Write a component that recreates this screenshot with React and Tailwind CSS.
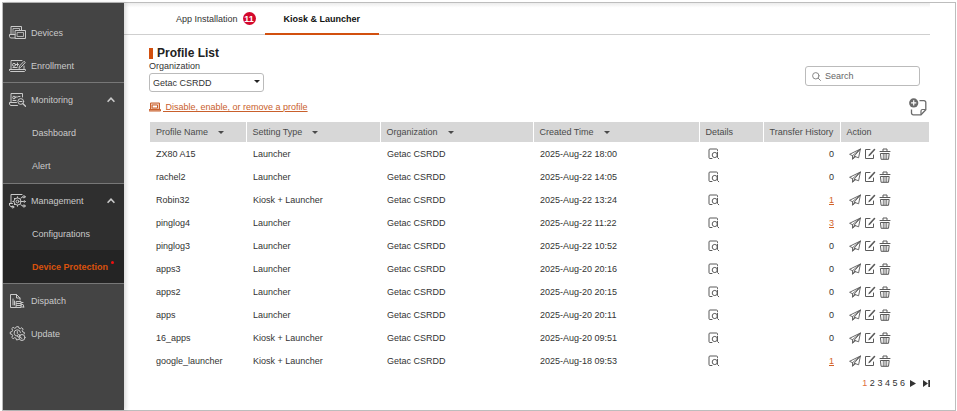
import React from "react";

const stroke = {
  fill: "none",
  stroke: "currentColor",
  strokeWidth: 1,
  strokeLinecap: "round",
  strokeLinejoin: "round",
};

function DevicesIcon() {
  return (
    <svg className="h-4 w-[17px] shrink-0" viewBox="0 0 17 16" {...stroke} aria-hidden="true">
      <path d="M2 9.500V1.500h10.500V5" />
      <path d="M4 9.500V3.500h6.500V5" strokeWidth="0.8" />
      <path d="M6 9.500H.5v2l1 1.500H6" />
      <rect x="6.500" y="5.500" width="10" height="8" />
      <rect x="8.500" y="7.500" width="6" height="4" strokeWidth="0.8" />
    </svg>
  );
}

function EnrollmentIcon() {
  return (
    <svg className="h-4 w-[17px] shrink-0" viewBox="0 0 17 16" {...stroke} aria-hidden="true">
      <path d="M2 11V2.500h11" />
      <path d="M15 8v3" />
      <path d="M.5 11.500h16v1l-1 1H1.500l-1-1z" />
      <circle cx="5" cy="6.800" r="1.500" />
      <path d="M6.500 6.500h3M8.500 5v3M4 9.500h4" />
      <path d="M10 10l.5-2L15 3.300l1.300 1.200L11.800 9.300z" />
    </svg>
  );
}

function MonitoringIcon() {
  return (
    <svg className="h-4 w-[17px] shrink-0" viewBox="0 0 17 16" {...stroke} aria-hidden="true">
      <path d="M2 10.500V1.500h11.500V5" />
      <path d="M7.500 10.500H.5V12l1 1.500h7" />
      <circle cx="5" cy="5.500" r="1.300" />
      <path d="M6.500 5h2M9.500 4.500h1.500M4 8.500h3" />
      <circle cx="11.800" cy="9.500" r="2.900" />
      <path d="M10.500 9.500h2.500" />
      <path d="M14 11.700l2.500 2.600" strokeWidth="1.300" />
    </svg>
  );
}

function ManagementIcon() {
  return (
    <svg className="h-4 w-[17px] shrink-0" viewBox="0 0 17 16" {...stroke} aria-hidden="true">
      <path d="M2 10V1.500h11" />
      <path d="M.5 10.500h3M.5 10.500V12l1 1.500H4" />
      <circle cx="8.500" cy="8.500" r="3.600" />
      <circle cx="8.500" cy="8.500" r="1.400" />
      <path d="M8.500 3.800v1M8.500 12.200v1M3.800 8.500h1M5.200 5.200l.7.7M5.200 11.800l.7-.7M11.800 5.200l1.700-1.200M12.200 8.500h2M11.800 11.800l1.700 1" />
      <circle cx="15" cy="3.800" r="1.100" />
      <circle cx="15.400" cy="8.500" r="0.800" />
      <circle cx="15" cy="13" r="1.100" />
      <circle cx="3.800" cy="14" r="1" />
    </svg>
  );
}

function DispatchIcon() {
  return (
    <svg className="h-4 w-[17px] shrink-0" viewBox="0 0 17 16" {...stroke} aria-hidden="true">
      <path d="M7 14.500H1.500v-13h6l3.500 3.500v2" />
      <path d="M7.500 1.500V5H11" />
      <path d="M4 6v6M5.500 8v4" />
      <path d="M7.500 8.500h4.500v6H7.500zM7.500 10.500H12M7.500 12.500H12" />
      <path d="M12.500 9.500h1.500M12.500 11.500h1.500M12.500 14h2.500M14.500 12.500v1.500" />
    </svg>
  );
}

function UpdateIcon() {
  return (
    <svg className="h-4 w-[17px] shrink-0" viewBox="0 0 17 16" {...stroke} aria-hidden="true">
      <path d="M9.500 13.500l-2 .5-.4-1.700-1.500-.6-1.500 1L2.700 11.300l1-1.500-.6-1.400-1.800-.4V6l1.800-.4.6-1.400-1-1.500L4.100 1.300l1.500 1 1.400-.6.5-1h2l.4 1.400 1.400.6 1.500-1 1.400 1.400-1 1.500.6 1.400 1.500.4v1.500" />
      <path d="M8.500 10.200a3.200 3.200 0 1 1 3-3.700" />
      <path d="M8.300 5.500v2" />
      <circle cx="13" cy="11.500" r="3" />
      <circle cx="9.800" cy="9.800" r="1.300" />
      <path d="M10.500 11l2.500 1.500" />
    </svg>
  );
}

function Chevron() {
  return (
    <svg className="h-2 w-2" viewBox="0 0 8 8" fill="none" stroke="currentColor" strokeWidth="1.600" aria-hidden="true">
      <path d="M.6 5.800L4 2.200 7.400 5.800" />
    </svg>
  );
}

function Caret() {
  return (
    <svg className="h-[3px] w-[6px]" viewBox="0 0 6 3" fill="currentColor" aria-hidden="true">
      <path d="M0 0h6L3 3z" />
    </svg>
  );
}

function DetailsIcon() {
  return (
    <svg className="h-3 w-3" viewBox="0 0 12 12" {...stroke} aria-hidden="true">
      <path d="M9.500 2.500V2a1 1 0 0 0-1-1H2a1 1 0 0 0-1 1v7.500a1 1 0 0 0 1 1h2" />
      <circle cx="6.800" cy="7" r="2.600" />
      <path d="M9.500 4.200v5.300l1.300 1.300" />
    </svg>
  );
}

function SendIcon() {
  return (
    <svg className="h-3 w-3" viewBox="0 0 12 12" {...stroke} strokeWidth="0.9" aria-hidden="true">
      <path d="M11.400 1L.6 6.300l2.900 1.400L11.400 1 9.600 9.800 5.500 8.300z" />
      <path d="M3.500 7.700v3.500l2-2.900" />
      <path d="M3.700 11l2.800-2.200" />
    </svg>
  );
}

function EditIcon() {
  return (
    <svg className="h-3 w-3" viewBox="0 0 12 12" {...stroke} aria-hidden="true">
      <path d="M6 1.500H1.500v9h8V7" />
      <path d="M5.500 7l5-5.500" strokeWidth="1.600" />
      <path d="M4.800 7.900l.5-.6" />
    </svg>
  );
}

function TrashIcon() {
  return (
    <svg className="h-3 w-3" viewBox="0 0 12 12" {...stroke} aria-hidden="true">
      <path d="M1 3.500h10M4 3.200V1h4v2.200" />
      <path d="M1.800 5.500h8.400L9.500 11.300h-7z" />
      <path d="M4.300 6v5M6 6v5M7.700 6v5" strokeWidth="0.8" />
    </svg>
  );
}

function LaptopIcon() {
  return (
    <svg className="h-[10px] w-3" viewBox="0 0 12 10" {...stroke} aria-hidden="true">
      <path d="M1.500 7V1h9v6z" fill="currentColor" fillOpacity="0.3" />
      <rect x="3.500" y="3" width="5" height="3" fill="#fff" />
      <path d="M.5 7.500h11v1.500H.5z" fill="currentColor" fillOpacity="0.5" />
    </svg>
  );
}

function AddNoteIcon() {
  return (
    <svg className="h-[18px] w-[18px]" viewBox="0 0 18 18" aria-hidden="true">
      <path d="M10.500 2.700H15a1.800 1.800 0 0 1 1.800 1.800v7.300L12 16.800H4.300a1.800 1.800 0 0 1-1.800-1.800V11.500" fill="none" stroke="#6b6b6b" strokeWidth="1.300" />
      <path d="M16.600 11.500H13.500a1.500 1.500 0 0 0-1.500 1.500v3.500" fill="none" stroke="#6b6b6b" strokeWidth="1.200" />
      <circle cx="4.700" cy="4.900" r="4.600" fill="#6b6b6b" />
      <path d="M4.700 2.300v5.200M2.100 4.900h5.200" stroke="#fff" strokeWidth="1.200" />
    </svg>
  );
}

function NavItem({ icon, label }) {
  return (
    <a href="#" className="flex h-[33px] items-center gap-[5px] pl-[6px]">
      {icon}
      {label}
    </a>
  );
}

function NavGroup({ icon, label }) {
  return (
    <button type="button" aria-expanded="true" className="flex h-[33px] w-full items-center gap-[5px] pr-[9px] pl-[6px] text-left">
      {icon}
      <span className="flex-1">{label}</span>
      <Chevron />
    </button>
  );
}

function Sidebar() {
  return (
    <nav className="z-10 w-[121px] shrink-0 bg-[#444] pt-[13px] text-[#cacaca] shadow-[2px_0_4px_rgba(0,0,0,0.15)]">
      <NavItem icon={<DevicesIcon />} label="Devices" />
      <NavItem icon={<EnrollmentIcon />} label="Enrollment" />
      <div className="border-t border-[#777] pb-px">
        <NavGroup icon={<MonitoringIcon />} label="Monitoring" />
        <a href="#" className="flex h-[33px] items-center pl-[29px]">Dashboard</a>
        <a href="#" className="flex h-[33px] items-center pl-[29px]">Alert</a>
      </div>
      <div className="border-y border-[#777] bg-[#2f2f2f]">
        <NavGroup icon={<ManagementIcon />} label="Management" />
        <a href="#" className="flex h-[33px] items-center pl-[29px]">Configurations</a>
        <a href="#" aria-current="page" className="flex h-[33px] items-center gap-[3px] bg-[#242424] pl-[29px] font-bold text-[#d9520d]">
          Device Protection
          <span className="mb-2 h-[3px] w-[3px] rounded-full bg-[#f01010]" />
        </a>
      </div>
      <NavItem icon={<DispatchIcon />} label="Dispatch" />
      <NavItem icon={<UpdateIcon />} label="Update" />
    </nav>
  );
}

const profiles = [
  ["ZX80 A15", "Launcher", "2025-Aug-22 18:00", 0],
  ["rachel2", "Launcher", "2025-Aug-22 14:05", 0],
  ["Robin32", "Kiosk + Launcher", "2025-Aug-22 13:24", 1],
  ["pinglog4", "Launcher", "2025-Aug-22 11:22", 3],
  ["pinglog3", "Launcher", "2025-Aug-22 10:52", 0],
  ["apps3", "Launcher", "2025-Aug-20 20:16", 0],
  ["apps2", "Launcher", "2025-Aug-20 20:15", 0],
  ["apps", "Launcher", "2025-Aug-20 20:11", 0],
  ["16_apps", "Kiosk + Launcher", "2025-Aug-20 09:51", 0],
  ["google_launcher", "Kiosk + Launcher", "2025-Aug-18 09:53", 1],
];

function HeadCell({ label, sortable }) {
  return (
    <th scope="col" className="border-l border-white px-[6px] font-normal first:border-l-0">
      {sortable ? (
        <button type="button" className="flex items-center gap-[10px] whitespace-nowrap">
          {label}
          <Caret />
        </button>
      ) : (
        <span className="whitespace-nowrap">{label}</span>
      )}
    </th>
  );
}

function ProfileTable() {
  return (
    <table className="w-full table-fixed text-left text-[#333]">
      <colgroup>
        <col className="w-[96px]" />
        <col className="w-[134px]" />
        <col className="w-[153px]" />
        <col className="w-[166px]" />
        <col className="w-[64px]" />
        <col className="w-[77px]" />
        <col />
      </colgroup>
      <thead className="bg-[#d7d7d7] text-[#4a4a4a]">
        <tr className="h-5">
          <HeadCell label="Profile Name" sortable />
          <HeadCell label="Setting Type" sortable />
          <HeadCell label="Organization" sortable />
          <HeadCell label="Created Time" sortable />
          <HeadCell label="Details" />
          <HeadCell label="Transfer History" />
          <HeadCell label="Action" />
        </tr>
      </thead>
      <tbody>
        {profiles.map(([name, type, created, transfers]) => (
          <tr key={name} className="h-[23px]">
            <td className="px-[6px]">{name}</td>
            <td className="px-[7px]">{type}</td>
            <td className="px-[7px]">Getac CSRDD</td>
            <td className="px-[7px]">{created}</td>
            <td className="px-[9px]">
              <button type="button" aria-label={`Details of ${name}`} className="block text-[#5a5a5a]">
                <DetailsIcon />
              </button>
            </td>
            <td className="px-[6px] text-right">
              {transfers > 0 ? (
                <a href="#" className="text-[#d2622a] underline">{transfers}</a>
              ) : (
                transfers
              )}
            </td>
            <td className="px-[9px]">
              <div className="flex gap-[3px] text-[#5a5a5a]">
                <button type="button" aria-label={`Send ${name}`}><SendIcon /></button>
                <button type="button" aria-label={`Edit ${name}`}><EditIcon /></button>
                <button type="button" aria-label={`Delete ${name}`}><TrashIcon /></button>
              </div>
            </td>
          </tr>
        ))}
      </tbody>
    </table>
  );
}

function Pagination() {
  return (
    <nav aria-label="Pages" className="flex items-center justify-end pt-[5px] text-[#333]">
      <div>
        <a href="#" aria-current="page" className="text-[#e0703a]">1</a>
        {[2, 3, 4, 5, 6].map((page) => (
          <React.Fragment key={page}>
            {" "}
            <a href="#">{page}</a>
          </React.Fragment>
        ))}
      </div>
      <button type="button" aria-label="Next page" className="ml-[5px]">
        <svg className="h-[7px] w-[6px]" viewBox="0 0 6 7" fill="currentColor"><path d="M0 0l6 3.500L0 7z" /></svg>
      </button>
      <button type="button" aria-label="Last page" className="ml-[7px]">
        <svg className="h-[7px] w-[7px]" viewBox="0 0 7 7" fill="currentColor"><path d="M0 0l5 3.500L0 7zM5.300 0H7v7H5.300z" /></svg>
      </button>
    </nav>
  );
}

export default function App() {
  return (
    <div className="flex min-h-screen bg-white pt-[2px] pr-px pl-[2px] font-['Liberation_Sans',Arial,sans-serif] text-[9px] leading-[12px] text-[#333]">
      <div className="flex flex-1 border border-[#bdbdbd]">
        <Sidebar />
        <main className="min-w-0 flex-1 pr-[25px]">
          <div className="flex h-8 border-b border-[#cfcfcf] bg-linear-to-b from-[#ececec] to-white to-15% pl-[52px]">
            <a href="#" className="flex items-center gap-[5px] pr-[9px]">
              App Installation
              <span className="flex h-[13px] w-[13px] items-center justify-center rounded-full bg-[#d3082c] font-bold text-white">11</span>
            </a>
            <a href="#" aria-current="page" className="-mb-px flex items-center border-b-2 border-[#d2500f] px-[19px] pt-[2px] font-bold text-[#111]">
              Kiosk &amp; Launcher
            </a>
          </div>

          <div className="pt-3 pl-[25px]">
            <div className="flex items-end justify-between pr-[10px]">
              <div>
                <h1 className="flex items-center gap-1 text-[12px] leading-[13px] font-bold text-[#222]">
                  <span className="h-[11px] w-1 bg-[#d2500f]" />
                  Profile List
                </h1>
                <label htmlFor="organization" className="block">Organization</label>
                <div className="relative mt-px w-[115px]">
                  <select id="organization" className="block h-[19px] w-full appearance-none rounded-[3px] border border-[#bbb] bg-white pr-4 pl-[3px] leading-[12px]">
                    <option>Getac CSRDD</option>
                  </select>
                  <span className="pointer-events-none absolute top-[7px] right-[4px] text-[#222]"><Caret /></span>
                </div>
              </div>
              <div className="mb-[6px] flex h-[20px] w-[115px] items-center gap-1 rounded-[3px] border border-[#bbb] px-[6px]">
                <svg className="h-[9px] w-[9px] shrink-0 text-[#888]" viewBox="0 0 9 9" {...stroke} aria-hidden="true">
                  <circle cx="3.800" cy="3.800" r="3.200" />
                  <path d="M6.200 6.200L8.500 8.500" />
                </svg>
                <input type="search" aria-label="Search" placeholder="Search" className="min-w-0 flex-1 bg-transparent outline-none placeholder:text-[#666]" />
              </div>
            </div>

            <div className="flex h-[30px] items-center justify-between pr-[3px]">
              <a href="#" className="flex items-center gap-[2px] text-[#c9602c] underline">
                <LaptopIcon />
                <span className="whitespace-pre"> Disable, enable, or remove a profile</span>
              </a>
              <button type="button" aria-label="Add profile">
                <AddNoteIcon />
              </button>
            </div>

            <div className="pr-px pl-px">
              <ProfileTable />
            </div>
            <Pagination />
          </div>
        </main>
      </div>
    </div>
  );
}
